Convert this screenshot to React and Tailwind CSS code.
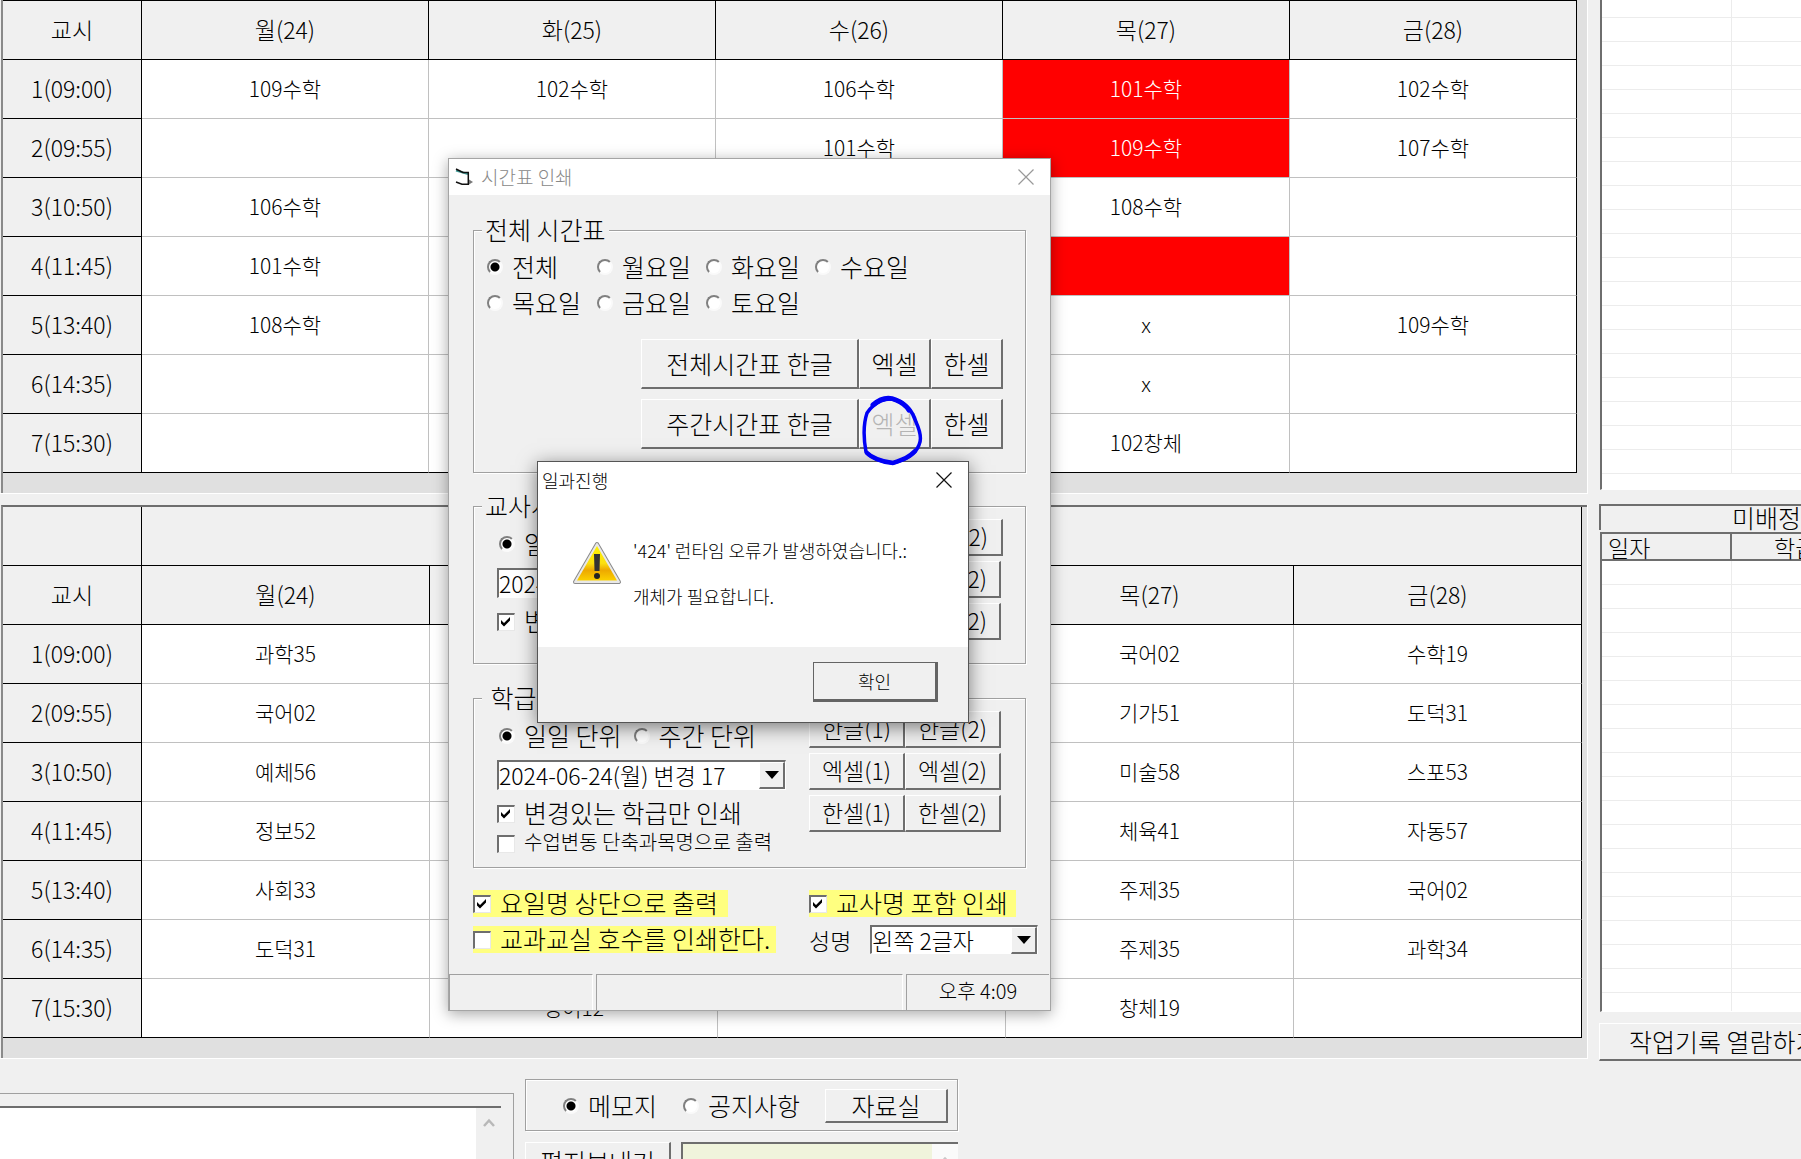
const FONT = "[font-family:'Noto_Sans_CJK_KR',sans-serif]";

const DAYS = ["월(24)", "화(25)", "수(26)", "목(27)", "금(28)"];
const TIMES = ["1(09:00)", "2(09:55)", "3(10:50)", "4(11:45)", "5(13:40)", "6(14:35)", "7(15:30)"];

const TEACHER = [
  ["109수학", "102수학", "106수학", "!101수학", "102수학"],
  ["", "", "101수학", "!109수학", "107수학"],
  ["106수학", "", "", "108수학", ""],
  ["101수학", "", "", "!", ""],
  ["108수학", "", "", "x", "109수학"],
  ["", "", "", "x", ""],
  ["", "", "", "102창체", ""],
];

const CLASSROOM = [
  ["과학35", "", "", "국어02", "수학19"],
  ["국어02", "", "", "기가51", "도덕31"],
  ["예체56", "", "", "미술58", "스포53"],
  ["정보52", "", "", "체육41", "자동57"],
  ["사회33", "", "", "주제35", "국어02"],
  ["도덕31", "", "", "주제35", "과학34"],
  ["", "영어12", "", "창체19", ""],
];

const RAISED = "bg-[#f0f0f0] border-t border-l border-b-2 border-r-2 border-t-white border-l-white border-b-[#6e6e6e] border-r-[#6e6e6e]";
const SUNKEN = "bg-white border-t-2 border-l-2 border-b border-r border-t-[#6e6e6e] border-l-[#6e6e6e] border-b-white border-r-white";

function HeadRow({ first }) {
  const cell = "box-border border-b border-r border-black bg-[#f0f0f0] pb-[3px] font-light text-[23px] leading-6 " + (first ? "h-[60px] border-t" : "h-[59px]");
  return (
    <tr>
      <th className={cell}>교시</th>
      {DAYS.map((d) => (
        <th key={d} className={cell}>{d}</th>
      ))}
    </tr>
  );
}

function Timetable({ rows, blankTop }) {
  return (
    <table className="w-full table-fixed border-separate border-spacing-0 text-center font-light">
      <colgroup>
        <col className="w-[139px]" />
        <col /><col /><col /><col /><col />
      </colgroup>
      <thead>
        {blankTop && (
          <tr>
            <td className="h-[59px] border-b border-r border-black bg-[#f0f0f0]" />
            <td colSpan={5} className="h-[59px] border-b border-r border-black bg-[#f0f0f0]" />
          </tr>
        )}
        <HeadRow first={!blankTop} />
      </thead>
      <tbody>
        {rows.map((row, r) => {
          const last = r === rows.length - 1;
          return (
            <tr key={r}>
              <th className="h-[59px] border-b border-r border-black bg-[#f0f0f0] pb-[3px] text-[23px] font-light leading-6">{TIMES[r]}</th>
              {row.map((v, c) => {
                const red = v.startsWith("!");
                return (
                  <td
                    key={c}
                    className={
                      "h-[59px] border-b border-r pb-[3px] text-[21px] leading-6 " +
                      (red ? "bg-[#ff0000] text-white " : "bg-white ") +
                      (last ? "border-b-black " : "border-b-[#c0c0c0] ") +
                      (c === 4 ? "border-r-black" : "border-r-[#c0c0c0]")
                    }
                  >
                    {red ? v.slice(1) : v}
                  </td>
                );
              })}
            </tr>
          );
        })}
      </tbody>
    </table>
  );
}

function GridRows({ count, firstShort }) {
  return (
    <tbody>
      {Array.from({ length: count }, (_, i) => (
        <tr key={i}>
          <td className={"w-[130px] border-b border-r border-[#ececec] " + (firstShort && i === 0 ? "h-[18px]" : "h-6")} />
          <td className="border-b border-[#ececec]" />
        </tr>
      ))}
    </tbody>
  );
}

function Radio({ name, label, checked, className = "" }) {
  return (
    <label className={"flex h-7 items-center gap-[9px] whitespace-nowrap text-[25px] leading-6 " + className}>
      <input
        type="radio"
        name={name}
        defaultChecked={checked}
        className="size-4 shrink-0 appearance-none rounded-full border-2 border-b-[#fafafa] border-l-[#808080] border-r-[#fafafa] border-t-[#808080] bg-white checked:bg-[radial-gradient(circle,#000_0_4px,#fff_5px)]"
      />
      <span className="pb-[2px]">{label}</span>
    </label>
  );
}

function Check({ label, checked, className = "", text = "text-[25px]" }) {
  return (
    <label className={"flex h-[27px] items-center gap-[9px] whitespace-nowrap leading-6 " + text + " " + className}>
      <span className="grid shrink-0">
        <input
          type="checkbox"
          defaultChecked={checked}
          className="peer col-start-1 row-start-1 size-[18px] appearance-none border-b border-l-2 border-r border-t-2 border-b-[#e8e8e8] border-l-[#6e6e6e] border-r-[#e8e8e8] border-t-[#6e6e6e] bg-white"
        />
        <svg viewBox="0 0 18 18" className="pointer-events-none invisible col-start-1 row-start-1 size-[18px] peer-checked:visible">
          <path d="M4 7 L7 10 L13 4 V7.5 L7 13.5 L4 10.5 Z" fill="#000" />
        </svg>
      </span>
      <span className="pb-[3px]">{label}</span>
    </label>
  );
}

function Btn({ children, className = "", disabled }) {
  return (
    <button disabled={disabled} className={RAISED + " whitespace-nowrap pb-[2px] text-center leading-6 disabled:text-[#b4b4b4] " + className}>
      {children}
    </button>
  );
}

function Combo({ value, label, className = "" }) {
  return (
    <span className={SUNKEN + " grid " + className}>
      <select aria-label={label} className="col-start-1 row-start-1 -mt-[2px] h-[29px] w-full appearance-none bg-transparent text-[23px] leading-7">
        <option>{value}</option>
      </select>
      <span className={RAISED + " pointer-events-none col-start-1 row-start-1 grid w-[26px] place-items-center justify-self-end"}>
        <svg viewBox="0 0 14 8" className="h-2 w-3.5"><path d="M0 0H14L7 8Z" fill="#000" /></svg>
      </span>
    </span>
  );
}

function Group({ title, className = "", children }) {
  return (
    <fieldset className={"relative min-w-0 border border-[#a0a0a0] shadow-[1px_1px_0_#fff,inset_1px_1px_0_#fff] " + className}>
      <legend className="absolute -top-4 left-2 whitespace-pre bg-[#f0f0f0] px-[3px] text-[25px] leading-7">{title}</legend>
      {children}
    </fieldset>
  );
}

function PrintButtons({ wideFirst }) {
  return (
    <div className="flex flex-col gap-[5px]">
      {["한글", "엑셀", "한셀"].map((t, i) => (
        <div key={t} className="flex">
          <Btn className="h-[37px] w-24 text-[23px]">{t}(1)</Btn>
          <Btn className={"h-[37px] text-[23px] " + (wideFirst && i === 0 ? "w-[98px]" : "w-24")}>{t}(2)</Btn>
        </div>
      ))}
    </div>
  );
}

function PrintGroup({ title, unit, only, wideFirst, extra, className }) {
  return (
    <Group title={title} className={className}>
      <div className="flex pl-[23px] pt-3">
        <div className="w-[312px]">
          <div className="flex h-[49px] items-center gap-3 pl-[2px]">
            <Radio name={unit} label="일일 단위" checked />
            <Radio name={unit} label="주간 단위" />
          </div>
          <Combo label="날짜" value="2024-06-24(월) 변경 17" className="h-[30px] w-[289px]" />
          <Check label={only} checked className="mt-[10px]" />
          {extra && <Check label={extra} text="text-xl" className="mt-[3px]" />}
        </div>
        <PrintButtons wideFirst={wideFirst} />
      </div>
    </Group>
  );
}

function PrintDialog() {
  return (
    <section className="absolute left-[448px] top-[158px] w-[603px] border border-[#a5a5a5] bg-[#f0f0f0] shadow-[0_3px_14px_rgba(0,0,0,0.35)]">
      <header className="flex h-9 items-center bg-white pl-[6px] pr-[16px]">
        <svg viewBox="0 0 18 18" className="size-[18px]" fill="none">
          <path d="M1 2.500L13 6" stroke="#3f9c98" strokeWidth="2" />
          <path d="M1 1L6 3.500L8 4.500H14" stroke="#111" strokeWidth="1.500" />
          <path d="M13.300 4.500V16.200H7L1 14" stroke="#111" strokeWidth="1.500" />
          <path d="M14 11.500L18 14L14 16.500Z" fill="#777" />
        </svg>
        <h2 className="ml-2 flex-1 pb-px text-[19px] font-light leading-6 text-[#888]">시간표 인쇄</h2>
        <button aria-label="닫기">
          <svg viewBox="0 0 16 16" className="size-4"><path d="M.5 .5L15.5 15.5M15.5 .5L.5 15.5" stroke="#999" strokeWidth="1.2" /></svg>
        </button>
      </header>
      <div className="flex flex-col pl-6 pr-[24px] pt-[35px] font-light">
        <Group title="전체 시간표" className="h-[243px]">
          <div className="grid grid-cols-[110px_109px_109px_109px] gap-y-2 pl-[13px] pt-[22px]">
            {["전체", "월요일", "화요일", "수요일", "목요일", "금요일", "토요일"].map((d, i) => (
              <Radio key={d} name="day" label={d} checked={i === 0} />
            ))}
          </div>
          <div className="mr-[22px] mt-[22px] flex flex-col gap-[10px]">
            <div className="flex justify-end text-[25px]">
              <Btn className="h-[50px] w-[218px]">전체시간표 한글</Btn>
              <Btn className="h-[50px] w-[72px]">엑셀</Btn>
              <Btn className="h-[50px] w-[72px]">한셀</Btn>
            </div>
            <div className="flex justify-end text-[25px]">
              <Btn className="h-[50px] w-[218px]">주간시간표 한글</Btn>
              <Btn disabled className="h-[50px] w-[72px]">엑셀</Btn>
              <Btn className="h-[50px] w-[72px]">한셀</Btn>
            </div>
          </div>
        </Group>
        <PrintGroup title="교사시간표" unit="teacher" only="변경있는 교사만 인쇄" wideFirst className="mt-[33px] h-[158px]" />
        <PrintGroup title=" 학급시간표" unit="class" only="변경있는 학급만 인쇄" extra="수업변동 단축과목명으로 출력" className="mt-[34px] h-[170px]" />
        <div className="mt-[22px] grid grid-cols-[336px_auto] items-center gap-y-2">
          <Check label="요일명 상단으로 출력" checked className="w-[255px] bg-[#ffff80]" />
          <Check label="교사명 포함 인쇄" checked className="w-[207px] bg-[#ffff80]" />
          <Check label="교과교실 호수를 인쇄한다." className="w-[303px] bg-[#ffff80]" />
          <div className="-mr-3 flex items-center justify-between text-[23px] leading-6">
            성명
            <Combo label="성명" value="왼쪽 2글자" className="h-[29px] w-[168px]" />
          </div>
        </div>
      </div>
      <footer className="mt-5 flex h-9 gap-[3px] pr-px text-xl font-light leading-6">
        <div className="w-[144px] border-l border-t border-[#a0a0a0] border-r border-r-white" />
        <div className="flex-1 border-l border-r border-t border-[#a0a0a0] border-r-white" />
        <div className="grid w-[143px] place-items-center border-l border-t border-[#a0a0a0] pb-[4px]">오후 4:09</div>
      </footer>
    </section>
  );
}

function ErrorBox() {
  return (
    <section role="alertdialog" className="absolute left-[537px] top-[461px] w-[432px] border border-[#555] bg-white text-lg font-light leading-6 shadow-[0_4px_18px_rgba(0,0,0,0.5)]">
      <header className="flex h-[35px] items-center justify-between pl-1 pr-4">
        <h2 className="font-light">일과진행</h2>
        <button aria-label="닫기">
          <svg viewBox="0 0 16 16" className="size-4"><path d="M.5 .5L15.5 15.5M15.5 .5L.5 15.5" stroke="#111" strokeWidth="1.2" /></svg>
        </button>
      </header>
      <div className="flex h-[150px] gap-[11px] pl-[34px] pt-[41px]">
        <svg viewBox="0 0 50 44" className="mt-[3px] h-11 w-[50px]">
          <defs>
            <linearGradient id="warn" x1="0" y1="0" x2="0" y2="1">
              <stop offset="0" stopColor="#fff200" />
              <stop offset="0.5" stopColor="#fbe010" />
              <stop offset="0.7" stopColor="#eda800" />
              <stop offset="1" stopColor="#fbd000" />
            </linearGradient>
          </defs>
          <path d="M25 3L47 41H3Z" fill="#8a8a8a" stroke="#8a8a8a" strokeWidth="4" strokeLinejoin="round" />
          <path d="M25 3L47 41H3Z" fill="#e8e8e8" stroke="#e8e8e8" strokeWidth="2" strokeLinejoin="round" />
          <path d="M25 5L45 39.500H5Z" fill="url(#warn)" />
          <path d="M22 13H28L27.500 30H22.500Z" fill="#333" />
          <circle cx="25" cy="35" r="3" fill="#222" />
        </svg>
        <div>
          <p>'424' 런타임 오류가 발생하였습니다.:</p>
          <p className="mt-[22px]">개체가 필요합니다.</p>
        </div>
      </div>
      <footer className="flex h-[75px] justify-end bg-[#f0f0f0] pr-[30px] pt-[15px]">
        <button className="h-10 w-[125px] border border-b-[3px] border-r-[3px] border-[#646464] bg-[#f0f0f0] text-lg leading-6">확인</button>
      </footer>
    </section>
  );
}

export default function App() {
  return (
    <div className={FONT + " relative h-screen overflow-hidden bg-[#f0f0f0] text-black"}>
      <main className="flex gap-[11px]">
        <div className="min-w-0 flex-1">
          <div className="border-b border-r border-white">
            <div className="ml-px border-l-2 border-[#8a8a8a] bg-[#e0e0e0] pb-5 pr-[10px]">
              <Timetable rows={TEACHER} />
            </div>
          </div>
          <div className="mt-[11px] border-b border-r border-white">
            <div className="ml-px border-l-2 border-t-2 border-l-[#8a8a8a] border-t-[#6e6e6e] bg-[#e0e0e0] pb-5 pr-[5px]">
              <Timetable rows={CLASSROOM} blankTop />
            </div>
          </div>
          <div className="flex items-start gap-[11px]">
            <div className="mt-[34px] w-[514px] border-r border-t border-[#a0a0a0] pr-3 pt-3">
              <div className="flex h-24 border-t-2 border-[#6e6e6e] bg-white">
                <textarea aria-label="메모" className="min-w-0 flex-1 resize-none" />
                <div className="w-[25px] bg-[#f0f0f0] pt-[10px]">
                  <svg viewBox="0 0 12 10" className="mx-auto h-[10px] w-3"><path d="M1 8L6 2.500L11 8" fill="none" stroke="#b8b8b8" strokeWidth="2.500" /></svg>
                </div>
              </div>
            </div>
            <div className="mt-5 w-[433px] font-light">
              <div className="flex h-[52px] items-center border border-[#a0a0a0] pl-[37px] pr-[9px] pt-[2px] shadow-[1px_1px_0_#fff,inset_1px_1px_0_#fff]">
                <Radio name="board" label="메모지" checked className="w-[120px]" />
                <Radio name="board" label="공지사항" />
                <Btn className="ml-auto h-[34px] w-[123px] text-[25px]">자료실</Btn>
              </div>
              <div className="mt-[11px] flex gap-[10px]">
                <Btn className="h-10 w-[146px] text-[25px]">편지보내기</Btn>
                <div className="flex h-10 flex-1 border-l-2 border-t-2 border-[#6e6e6e]">
                  <textarea aria-label="편지" className="min-w-0 flex-1 resize-none bg-[#f0f4dc]" />
                  <div className="w-[26px] bg-[#fafafa] pt-3">
                    <svg viewBox="0 0 12 10" className="mx-auto h-[10px] w-3"><path d="M1 8L6 2.500L11 8" fill="none" stroke="#c8c8c8" strokeWidth="2.500" /></svg>
                  </div>
                </div>
              </div>
            </div>
          </div>
        </div>

        <aside className="w-[202px] overflow-hidden whitespace-nowrap font-light">
          <div className="ml-px h-[490px] overflow-hidden border-b border-l-2 border-b-white border-l-[#6e6e6e] bg-white">
            <table className="w-full table-fixed border-separate border-spacing-0">
              <GridRows count={20} firstShort />
            </table>
          </div>
          <div className="mt-[14px] h-[26px] border-l-2 border-t-2 border-[#6e6e6e] pl-[131px] text-[25px] leading-[22px]">미배정</div>
          <div className="ml-px mt-[2px] h-[480px] overflow-hidden border-b border-l-2 border-t-2 border-b-white border-l-[#6e6e6e] border-t-[#6e6e6e] bg-white">
            <table className="w-full table-fixed border-separate border-spacing-0">
              <thead>
                <tr>
                  <th className="h-[27px] w-[130px] border-b-2 border-r-2 border-[#6e6e6e] bg-[#f0f0f0] pl-[6px] text-left text-[23px] font-light leading-6">일자</th>
                  <th className="h-[27px] border-b-2 border-[#6e6e6e] bg-[#f0f0f0] pl-[42px] text-left text-[23px] font-light leading-6">학급</th>
                </tr>
              </thead>
              <GridRows count={19} />
            </table>
          </div>
          <Btn className="mt-[11px] h-[38px] w-[240px] pl-[29px] text-left text-[25px]">작업기록 열람하기</Btn>
        </aside>
      </main>

      <PrintDialog />
      <ErrorBox />
      <svg viewBox="0 0 62 72" className="pointer-events-none absolute left-[861px] top-[395px] h-[72px] w-[62px]" fill="none" stroke="#0000f5" strokeLinecap="round" strokeLinejoin="round">
        <path d="M6 18C14 6 26 2 35 5C46 9 52 17 55 27C60 38 60 46 58 50C54 60 46 64 32 68C20 67 10 62 5 57C3 46 2 30 6 18Z" strokeWidth="3.500" />
        <path d="M12 10C20 3 28 2 35 5C40 7 44 9 48 15" strokeWidth="5" />
        <path d="M54 56C46 64 40 65 32 68C20 67 10 62 6 58" strokeWidth="4.500" />
      </svg>
    </div>
  );
}
